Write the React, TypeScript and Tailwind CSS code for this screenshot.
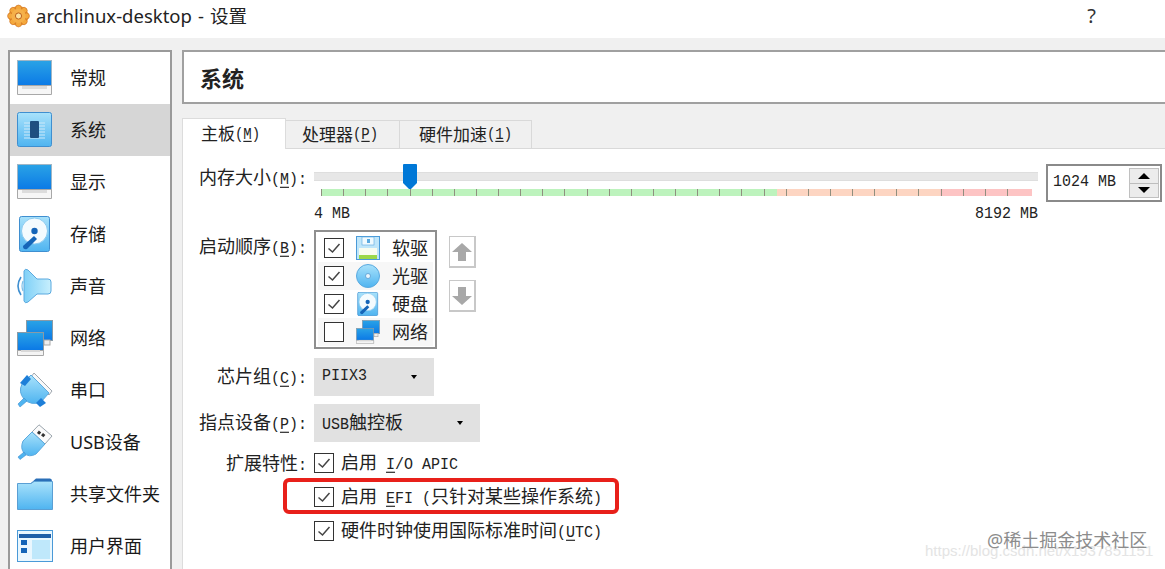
import React from "react";

const L = ({ children, u, sm }: { children?: React.ReactNode; u?: boolean; sm?: boolean }) => (
  <span className={`inline-block scale-y-[1.15] font-['Liberation_Mono',monospace] whitespace-pre ${sm ? "text-[14px]" : "text-[15px]"} ${u ? "underline underline-offset-2" : ""}`}>{children}</span>
);

const Defs = () => (
  <svg className="absolute w-0 h-0">
    <defs>
      <linearGradient id="screen" x1="0" y1="0" x2="0" y2="1">
        <stop offset="0" stopColor="#2aa3e6" />
        <stop offset="1" stopColor="#0a78e6" />
      </linearGradient>
      <linearGradient id="light" x1="0" y1="0" x2="0" y2="1">
        <stop offset="0" stopColor="#a9e2fb" />
        <stop offset="1" stopColor="#4fb4f0" />
      </linearGradient>
      <linearGradient id="lightH" x1="0" y1="0" x2="1" y2="0">
        <stop offset="0" stopColor="#7fd0f7" />
        <stop offset="1" stopColor="#c8effd" />
      </linearGradient>
    </defs>
  </svg>
);

const Monitor = () => (
  <svg width="36" height="36" viewBox="0 0 36 36">
    <rect x="0.5" y="0.5" width="34" height="26" fill="url(#screen)" stroke="#9fb6c6" />
    <path d="M0.5 25.5h34v9h-34z" fill="#f6f6f6" stroke="#a8a8a8" />
    <rect x="5" y="26" width="25" height="3" fill="#dcdcdc" />
  </svg>
);

const Chip = () => (
  <svg width="36" height="36" viewBox="0 0 36 36">
    <rect x="0.5" y="0.5" width="34" height="34" rx="2" fill="url(#light)" stroke="#3f8fd0" />
    <path d="M7 11h21M7 14h21M7 17h21M7 20h21M7 23h21M7 26h21" stroke="#cfeaf9" strokeWidth="1" />
    <rect x="13" y="9" width="9" height="17" rx="1" fill="#1f4f80" />
  </svg>
);

const Disk = ({ s = 36 }: { s?: number }) => (
  <svg width={s} height={s} viewBox="0 0 36 36">
    <rect x="2.5" y="0.5" width="30" height="35" rx="2" fill="url(#light)" stroke="#3f8fd0" />
    <circle cx="17.5" cy="15" r="13" fill="#f4fbfe" stroke="#8ccbf0" />
    <circle cx="17.5" cy="15" r="3.2" fill="#1565b8" />
    <path d="M6 30 L17 20 L20 23 L10 33 Q6 34 6 30Z" fill="#1565b8" />
  </svg>
);

const Speaker = () => (
  <svg width="36" height="36" viewBox="0 0 36 36">
    <path d="M7 3 Q8 0 11 2 L20 11 H31 Q34 11 34 14 V23 Q34 26 31 26 H20 L11 34 Q8 36 7 33 Z" fill="url(#lightH)" stroke="#5aa9df" />
    <path d="M4 9 Q-2 18 4 27" fill="none" stroke="#3f8fd0" strokeWidth="1.6" />
    <path d="M6 13 Q4 18 6 23" fill="none" stroke="#7cc0ea" strokeWidth="1.2" />
  </svg>
);

const Network = ({ s = 36 }: { s?: number }) => (
  <svg width={s} height={s} viewBox="0 0 36 36">
    <rect x="9.5" y="0.5" width="26" height="20" fill="url(#screen)" stroke="#8a9aa6" />
    <rect x="27" y="20" width="6" height="5" fill="#eee" stroke="#aaa" />
    <rect x="0.5" y="12.5" width="26" height="18" fill="url(#screen)" stroke="#8a9aa6" />
    <path d="M0.5 30.5h26v5h-26z" fill="#f4f4f4" stroke="#a8a8a8" />
    <rect x="4" y="30" width="19" height="2" fill="#d8d8d8" />
  </svg>
);

const Serial = () => (
  <svg width="36" height="36" viewBox="0 0 36 36">
    <path d="M17 1 L35 19 L32 23 L14 5Z" fill="#f8f8f8" stroke="#a0a8b0" />
    <path d="M14 3 L32 21 L24 30 Q14 34 7 27 Q1 20 5 12 Z" fill="url(#light)" stroke="#5aa9df" />
    <path d="M10 3 L14 7 L8 14 L3 11Z" fill="#1e7fd8" />
    <path d="M24 26 L29 31 L23 35 L19 31Z" fill="#1e7fd8" />
    <path d="M7 26 L1 32 L3 35 L10 29Z" fill="#4fb4f0" stroke="#3f8fd0" strokeWidth=".6" />
  </svg>
);

const Usb = () => (
  <svg width="36" height="36" viewBox="0 0 36 36">
    <path d="M22 0.8 L35 12 L28 20 L15 8Z" fill="#fbfbfb" stroke="#9aa4ac" />
    <rect x="21" y="7" width="3" height="3" transform="rotate(40 22 8)" fill="#333" />
    <path d="M26 9 l2.4 2 -2 2.3 -2.4 -2z" fill="#333" />
    <path d="M15 8 L28 20 L19 30 Q12 34 7 29 Q3 24 6 17 Z" fill="url(#light)" stroke="#5aa9df" />
    <path d="M7 28 L1 33 L3 35.5 L9 31Z" fill="#4fb4f0" stroke="#3f8fd0" strokeWidth=".6" />
  </svg>
);

const Folder = () => (
  <svg width="36" height="32" viewBox="0 0 36 32">
    <path d="M14 5 L19 0.5 H33 Q35 0.5 35 3 V8 H14Z" fill="#2a6fb8" />
    <path d="M0.5 5.5 H14 L17 3.5 H35.5 V31.5 H0.5Z" fill="url(#light)" stroke="#5a9fd4" />
  </svg>
);

const Ui = () => (
  <svg width="36" height="32" viewBox="0 0 36 32">
    <rect x="0.5" y="0.5" width="35" height="31" fill="#eaf7fe" stroke="#4a9ad8" />
    <rect x="2" y="4" width="32" height="4" fill="#1f5fa8" />
    <rect x="4" y="10" width="6" height="5" fill="#1565b8" />
    <rect x="4" y="18" width="6" height="5" fill="#1565b8" />
    <rect x="15" y="10" width="18" height="19" fill="#bfe8fb" />
  </svg>
);

const Floppy = () => (
  <svg width="24" height="24" viewBox="0 0 24 24">
    <rect x="0.5" y="0.5" width="23" height="23" fill="#bfe6fa" stroke="#4a9ad8" />
    <rect x="6" y="1" width="12" height="8" fill="#f0fafe" stroke="#5aa9df" strokeWidth=".6" />
    <rect x="11" y="3" width="3" height="4" fill="#5aa9df" />
    <rect x="3" y="12" width="18" height="11" fill="#f8fcf0" />
    <rect x="3" y="19" width="18" height="4" fill="#9bd84a" />
  </svg>
);

const Disc = () => (
  <svg width="24" height="24" viewBox="0 0 24 24">
    <circle cx="12" cy="12" r="11.5" fill="url(#light)" stroke="#5aa9df" />
    <circle cx="12" cy="12" r="2.5" fill="#eaf7fe" stroke="#4a8fc8" strokeWidth=".7" />
  </svg>
);

const Check = ({ on = true, s = 20 }: { on?: boolean; s?: number }) => (
  <svg width={s} height={s} viewBox="0 0 20 20" className="shrink-0">
    <rect x="0.5" y="0.5" width="19" height="19" fill="#fff" stroke="#333" />
    {on && <path d="M4.5 10.5 L8.5 14 L15.5 6" fill="none" stroke="#444" strokeWidth="1.5" />}
  </svg>
);

const Caret = () => <span className="w-0 h-0 border-x-[3.5px] border-x-transparent border-t-[4px] border-t-black" />;

const nav: [React.ReactNode, React.ReactNode, boolean?][] = [
  [<Monitor />, "常规"],
  [<Chip />, "系统", true],
  [<Monitor />, "显示"],
  [<Disk />, "存储"],
  [<Speaker />, "声音"],
  [<Network />, "网络"],
  [<Serial />, "串口"],
  [<Usb />, "USB设备"],
  [<Folder />, "共享文件夹"],
  [<Ui />, "用户界面"],
];

const boot: [React.ReactNode, string, boolean, boolean][] = [
  [<Floppy />, "软驱", true, false],
  [<Disc />, "光驱", true, true],
  [<Disk s={24} />, "硬盘", true, false],
  [<Network s={24} />, "网络", false, true],
];

const Label = ({ children, className = "" }: { children: React.ReactNode; className?: string }) => (
  <div className={`w-[117px] mr-[7px] shrink-0 text-right whitespace-nowrap ${className}`}>{children}</div>
);

const Opt = ({ children }: { children: React.ReactNode }) => (
  <div className="flex items-center gap-[7px] h-[34px] whitespace-nowrap">
    <Check />
    <div>{children}</div>
  </div>
);

const ArrowBtn = ({ up }: { up?: boolean }) => (
  <div className="w-[27px] h-[32px] border border-[#c8c8c8] border-b-2 border-r-2 bg-white flex items-center justify-center">
    <svg width="20" height="18" viewBox="0 0 20 18">
      <path d={up ? "M10 0 L20 9 H14 V18 H6 V9 H0Z" : "M10 18 L20 9 H14 V0 H6 V9 H0Z"} fill="#a8a8a8" />
    </svg>
  </div>
);

export default function App() {
  return (
    <div className="relative w-[1165px] h-[569px] overflow-hidden bg-[#f0f0f0] text-[#1a1a1a] font-['Noto_Sans','Noto_Sans_CJK_SC',sans-serif]">
      <Defs />
      {/* title */}
      <div className="h-[38px] bg-white flex items-center pl-[7px] pr-[69px] pb-[7px] text-[18.5px] text-[#222]">
        <svg width="23" height="24" viewBox="0 0 24 24" className="mr-[6px]">
          <circle cx="12" cy="12" r="10.5" fill="#f0a030" />
          {[0, 45, 90, 135, 180, 225, 270, 315].map((a) => (
            <circle key={a} cx="12" cy="3.8" r="3.2" fill="#f4a83c" stroke="#c8661c" strokeWidth=".6" transform={`rotate(${a} 12 12)`} />
          ))}
          <circle cx="12" cy="12" r="7.5" fill="#f5b04a" />
          <circle cx="12" cy="12" r="3.2" fill="#fbe2a0" stroke="#b85a18" strokeWidth="1" />
        </svg>
        <span className="flex-1">
          archlinux-desktop<span className="mx-[6px]">-</span>设置
        </span>
        <span className="text-[20px] text-[#333]">?</span>
      </div>

      <div className="flex gap-[10px] pl-[8px] pt-[12px] items-start">
        {/* sidebar */}
        <div className="w-[164px] h-[540px] shrink-0 bg-white border-2 border-b-0 border-[#9a9a9a] text-[18px]">
          {nav.map(([icon, name, sel], i) => (
            <div key={i} className={`h-[52px] flex items-center ${sel ? "bg-[#d6d6d6]" : ""}`}>
              <div className="w-[36px] ml-[7px] mr-[17px] flex justify-center">{icon}</div>
              <span className="whitespace-nowrap">{name}</span>
            </div>
          ))}
        </div>

        {/* main */}
        <div className="flex-1 min-w-0">
          <div className="h-[54px] bg-white border-2 border-r-0 border-[#a0a0a0] flex items-center pl-[16px] pt-[3px] text-[22px] font-bold text-[#222]">
            系统
          </div>

          {/* tabs */}
          <div className="flex items-end h-[45px] text-[17px] text-[#222]">
            <div className="h-[31px] w-[104px] pr-[7px] bg-white border border-b-0 border-[#dcdcdc] flex items-center justify-center whitespace-nowrap">
              主板<L sm>(</L><L sm u>M</L><L sm>)</L>
            </div>
            <div className="h-[29px] w-[114px] pr-[5px] border border-[#d9d9d9] border-l-0 flex items-center justify-center whitespace-nowrap">
              处理器<L sm>(</L><L sm u>P</L><L sm>)</L>
            </div>
            <div className="h-[29px] w-[132px] border border-[#d9d9d9] border-l-0 flex items-center justify-center whitespace-nowrap">
              硬件加速<L sm>(</L><L sm u>1</L><L sm>)</L>
            </div>
            <div className="flex-1 border-b border-[#d9d9d9]" />
          </div>

          {/* content */}
          <div className="h-[420px] bg-white border-l border-[#dcdcdc] pl-[7px] pt-[15px] text-[18px] text-[#222]">
            {/* memory */}
            <div className="flex h-[66px]">
              <Label className="leading-[26px]">内存大小<L>(</L><L u>M</L><L>):</L></Label>
              <div className="w-[724px] mr-[8px] shrink-0 pt-[8px] relative">
                <div className="h-[9px] bg-[#e7e7e7] border-y border-[#dedede]" />
                <svg width="14" height="26" viewBox="0 0 14 26" className="absolute left-[89px] top-0">
                  <path d="M0 1 Q0 0 1 0 H13 Q14 0 14 1 V19 L7 26 L0 19Z" fill="#0078d7" />
                </svg>
                <div className="flex h-[7px] ml-[7px] w-[711px] mt-[8px] relative">
                  <div className="w-[456px] bg-[#bdf3bd]" />
                  <div className="w-[163px] bg-[#fdd5c2]" />
                  <div className="w-[92px] bg-[#fdc4c4]" />
                  <div className="absolute inset-0 flex">
                    {Array.from({ length: 32 }).map((_, k) => (
                      <span key={k} className="w-[22.13px] shrink-0 h-full">
                        <span className="block w-px h-full bg-[#8f8f7f]" />
                      </span>
                    ))}
                  </div>
                </div>
                <div className="flex justify-between mt-[8px] text-[#222]">
                  <L>4 MB</L>
                  <L>8192 MB</L>
                </div>
              </div>
              <div className="w-[116px] h-[38px] shrink-0 border-2 border-[#8a8a8a] flex items-center justify-between pl-[5px] pr-[1px]">
                <L>1024 MB</L>
                <div className="w-[30px] h-[30px] border border-[#c0c0c0] bg-[#ececec] flex flex-col">
                  <div className="flex-1 flex items-center justify-center border-b border-[#bdbdbd]">
                    <span className="w-0 h-0 border-x-[6px] border-x-transparent border-b-[6px] border-b-black" />
                  </div>
                  <div className="flex-1 flex items-center justify-center">
                    <span className="w-0 h-0 border-x-[6px] border-x-transparent border-t-[6px] border-t-black" />
                  </div>
                </div>
              </div>
            </div>

            {/* boot */}
            <div className="flex h-[128px]">
              <Label className="pt-[3px]">启动顺序<L>(</L><L u>B</L><L>):</L></Label>
              <div className="w-[123px] h-[119px] border-2 border-[#8f8f8f] p-[2px] shrink-0 text-[18px]">
                {boot.map(([icon, name, on, alt], i) => (
                  <div key={i} className={`h-[28px] flex items-center pl-[6px] gap-[12px] ${alt ? "bg-[#f7f7f7]" : ""}`}>
                    <Check on={on} />
                    <div className="w-[24px] flex justify-center">{icon}</div>
                    <span className="whitespace-nowrap">{name}</span>
                  </div>
                ))}
              </div>
              <div className="ml-[12px] mt-[6px] flex flex-col gap-[12px]">
                <ArrowBtn up />
                <ArrowBtn />
              </div>
            </div>

            {/* selects */}
            <div className="flex items-center h-[38px] mb-[8px]">
              <Label>芯片组<L>(</L><L u>C</L><L>):</L></Label>
              <div className="w-[120px] h-[38px] bg-[#e1e1e1] flex items-center justify-between pl-[8px] pr-[17px]">
                <L>PIIX3</L>
                <Caret />
              </div>
            </div>
            <div className="flex items-center h-[38px] mb-[4px]">
              <Label>指点设备<L>(</L><L u>P</L><L>):</L></Label>
              <div className="w-[166px] h-[38px] bg-[#e1e1e1] flex items-center justify-between pl-[8px] pr-[17px]">
                <span className="whitespace-nowrap"><L>USB</L>触控板</span>
                <Caret />
              </div>
            </div>

            <div className="flex">
              <Label className="leading-[34px]">扩展特性<L>:</L></Label>
              <div>
                <Opt>启用<L> </L><L u>I</L><L>/O APIC</L></Opt>
                <div className="relative">
                  <Opt>启用<L> </L><L u>E</L><L>FI (</L>只针对某些操作系统<L>)</L></Opt>
                  <div className="absolute -left-[31px] -top-[2px] w-[336px] h-[36px] border-4 border-[#e8201a] rounded-[6px]" />
                </div>
                <Opt>硬件时钟使用国际标准时间<L>(</L><L u>U</L><L>TC)</L></Opt>
              </div>
            </div>
          </div>
        </div>
      </div>

      {/* watermark */}
      <div className="absolute left-[925px] top-[542px] text-[15px] leading-[18px] text-[#e4e4e4] font-['Liberation_Sans',sans-serif] whitespace-nowrap">
        https://blog.csdn.net/x1937851151
      </div>
      <div className="absolute left-[987px] top-[528px] text-[18px] leading-[24px] text-[#8c8c8c] whitespace-nowrap">
        @稀土掘金技术社区
      </div>
    </div>
  );
}
